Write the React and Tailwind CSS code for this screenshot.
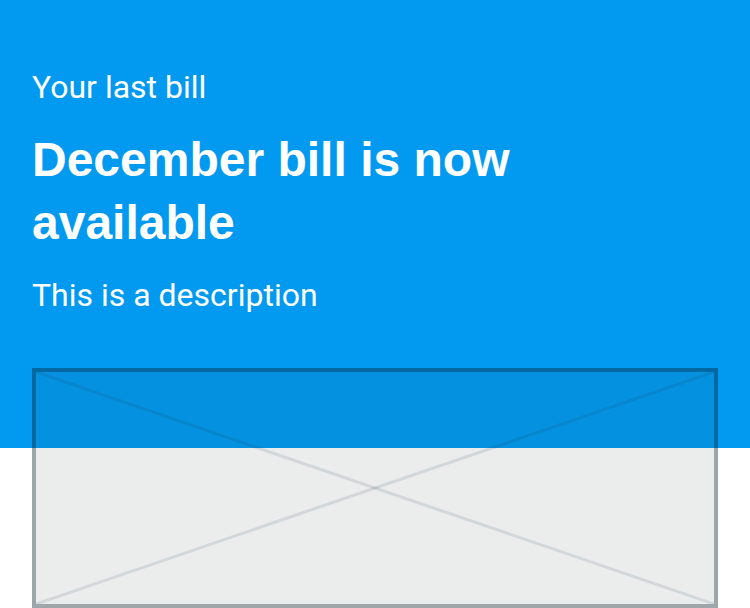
export default function App() {
  return (
    <div className="h-[608px] w-[750px] overflow-hidden bg-white">
      <header className="flex h-[448px] flex-col bg-[#029af0] px-8 pt-[68px] text-white">
        <p className="font-['Roboto',sans-serif] text-[32px] leading-[38px]">Your last bill</p>
        <h1 className="mt-[22px] font-['Liberation_Sans',Arial,sans-serif] text-[48px] font-bold leading-[63px]">
          December bill is now
          <br />
          available
        </h1>
        <p className="mt-[22px] font-['Roboto',sans-serif] text-[32px] leading-[38px]">This is a description</p>
        <Placeholder />
      </header>
    </div>
  )
}

function Placeholder() {
  return (
    <div className="relative z-10 mt-[54px] h-[240px] w-full shrink-0 border-4 border-[rgba(0,20,35,0.33)] bg-[rgba(30,55,60,0.09)]">
      <svg className="h-full w-full" viewBox="0 0 100 100" preserveAspectRatio="none">
        <line x1="0" y1="0" x2="100" y2="100" stroke="rgba(30,55,80,0.12)" strokeWidth="3" vectorEffect="non-scaling-stroke" />
        <line x1="100" y1="0" x2="0" y2="100" stroke="rgba(30,55,80,0.12)" strokeWidth="3" vectorEffect="non-scaling-stroke" />
      </svg>
    </div>
  )
}
